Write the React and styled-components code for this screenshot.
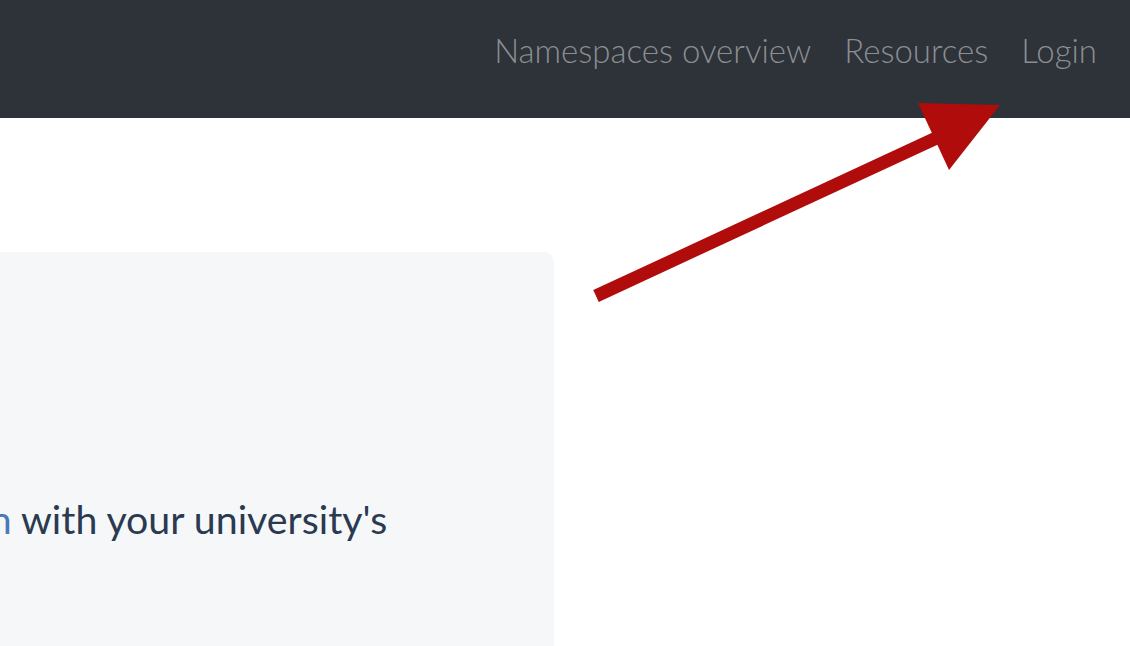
import React from 'react';
import styled, { createGlobalStyle } from 'styled-components';

const GlobalStyle = createGlobalStyle`
  html, body {
    margin: 0;
    padding: 0;
    background: #ffffff;
    overflow: hidden;
  }
  body {
    font-family: Lato, "Open Sans", sans-serif;
  }
`;

const Page = styled.div`
  position: relative;
  width: 1130px;
  height: 646px;
  overflow: hidden;
`;

const NavBar = styled.nav`
  height: 118px;
  background: #2e3239;
  display: flex;
  justify-content: flex-end;
  align-items: flex-start;
  padding: 28px 33px 0 0;
  box-sizing: border-box;
  gap: 33px;
`;

const NavLink = styled.a`
  color: #8b8e92;
  font-size: 33px;
  line-height: 44px;
  text-decoration: none;
  font-weight: 300;
`;

const Main = styled.main`
  padding-top: 134px;
`;

const Card = styled.section`
  margin-left: -300px;
  width: 854px;
  height: 420px;
  background: #f6f7f9;
  border-radius: 10px;
  padding: 245px 0 0 219px;
  box-sizing: border-box;
`;

const Lead = styled.p`
  margin: 0;
  font-size: 39.3px;
  font-weight: 400;
  line-height: 44px;
  color: #2a3a50;
  white-space: nowrap;
`;

const Link = styled.a`
  color: #4a79b8;
  text-decoration: none;
`;

const ArrowLayer = styled.svg`
  position: absolute;
  left: 0;
  top: 0;
  pointer-events: none;
`;

const Arrow = () => (
  <ArrowLayer width="1130" height="646" viewBox="0 0 1130 646">
    <line x1="596" y1="296" x2="945" y2="134" stroke="#b00c0b" strokeWidth="13" />
    <polygon points="918,103 1000,105 949,170" fill="#b00c0b" />
  </ArrowLayer>
);

export default function App() {
  return (
    <Page>
      <GlobalStyle />
      <NavBar>
        <NavLink href="#">Namespaces overview</NavLink>
        <NavLink href="#">Resources</NavLink>
        <NavLink href="#">Login</NavLink>
      </NavBar>
      <Main>
        <Card>
          <Lead>
            <Link href="#">Login</Link> with your university's
          </Lead>
        </Card>
      </Main>
      <Arrow />
    </Page>
  );
}
